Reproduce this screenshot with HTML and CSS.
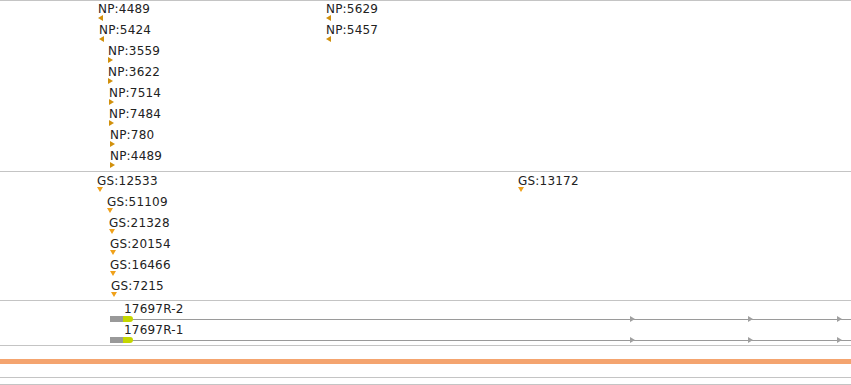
FILE: index.html
```html
<!DOCTYPE html>
<html lang="en">
<head>
    <meta charset="UTF-8">
    <title>Track View</title>
    <link rel="stylesheet" href="styles.css">
</head>
<body>
    <div class="tracks">
        <!-- NP track -->
        <div class="track track-np">
            <div class="feature" style="left:98px; top:0px"><div class="label">NP:4489</div><svg class="glyph np" width="6" height="6"><polygon points="5,0 5,6 0,3"/></svg></div>
            <div class="feature" style="left:99px; top:21px"><div class="label">NP:5424</div><svg class="glyph np" width="6" height="6"><polygon points="5,0 5,6 0,3"/></svg></div>
            <div class="feature" style="left:108px; top:42px"><div class="label">NP:3559</div><svg class="glyph np" width="6" height="6"><polygon points="0,0 5,3 0,6"/></svg></div>
            <div class="feature" style="left:108px; top:63px"><div class="label">NP:3622</div><svg class="glyph np" width="6" height="6"><polygon points="0,0 5,3 0,6"/></svg></div>
            <div class="feature" style="left:109px; top:84px"><div class="label">NP:7514</div><svg class="glyph np" width="6" height="6"><polygon points="0,0 5,3 0,6"/></svg></div>
            <div class="feature" style="left:109px; top:105px"><div class="label">NP:7484</div><svg class="glyph np" width="6" height="6"><polygon points="0,0 5,3 0,6"/></svg></div>
            <div class="feature" style="left:110px; top:126px"><div class="label">NP:780</div><svg class="glyph np" width="6" height="6"><polygon points="0,0 5,3 0,6"/></svg></div>
            <div class="feature" style="left:110px; top:147px"><div class="label">NP:4489</div><svg class="glyph np" width="6" height="6"><polygon points="0,0 5,3 0,6"/></svg></div>
            <div class="feature" style="left:326px; top:0px"><div class="label">NP:5629</div><svg class="glyph np" width="6" height="6"><polygon points="5,0 5,6 0,3"/></svg></div>
            <div class="feature" style="left:326px; top:21px"><div class="label">NP:5457</div><svg class="glyph np" width="6" height="6"><polygon points="5,0 5,6 0,3"/></svg></div>
        </div>

        <!-- GS track -->
        <div class="track track-gs">
            <div class="feature" style="left:97px; top:1px"><div class="label">GS:12533</div><svg class="glyph gs" width="6" height="6"><polygon points="0,0 6,0 3,5"/></svg></div>
            <div class="feature" style="left:107px; top:22px"><div class="label">GS:51109</div><svg class="glyph gs" width="6" height="6"><polygon points="0,0 6,0 3,5"/></svg></div>
            <div class="feature" style="left:109px; top:43px"><div class="label">GS:21328</div><svg class="glyph gs" width="6" height="6"><polygon points="0,0 6,0 3,5"/></svg></div>
            <div class="feature" style="left:110px; top:64px"><div class="label">GS:20154</div><svg class="glyph gs" width="6" height="6"><polygon points="0,0 6,0 3,5"/></svg></div>
            <div class="feature" style="left:110px; top:85px"><div class="label">GS:16466</div><svg class="glyph gs" width="6" height="6"><polygon points="0,0 6,0 3,5"/></svg></div>
            <div class="feature" style="left:111px; top:106px"><div class="label">GS:7215</div><svg class="glyph gs" width="6" height="6"><polygon points="0,0 6,0 3,5"/></svg></div>
            <div class="feature" style="left:518px; top:1px"><div class="label">GS:13172</div><svg class="glyph gs" width="6" height="6"><polygon points="0,0 6,0 3,5"/></svg></div>
        </div>

        <!-- gene track -->
        <div class="track track-gene">
            <div class="feature" style="left:110px; top:0px">
                <div class="label gene-label">17697R-2</div>
                <svg class="glyph gene" width="741" height="7">
                    <rect class="intron" x="0" y="4" width="741" height="1"/>
                    <rect class="utr" x="0" y="1" width="13" height="6"/>
                    <path class="cds" d="M13 1 H20 A3 3 0 0 1 20 7 H13 Z"/>
                    <polygon class="strand" points="520,1 525,4 520,7"/>
                    <polygon class="strand" points="638,1 643,4 638,7"/>
                    <polygon class="strand" points="727,1 732,4 727,7"/>
                </svg>
            </div>
            <div class="feature" style="left:110px; top:21px">
                <div class="label gene-label">17697R-1</div>
                <svg class="glyph gene" width="741" height="7">
                    <rect class="intron" x="0" y="4" width="741" height="1"/>
                    <rect class="utr" x="0" y="1" width="13" height="6"/>
                    <path class="cds" d="M13 1 H20 A3 3 0 0 1 20 7 H13 Z"/>
                    <polygon class="strand" points="520,1 525,4 520,7"/>
                    <polygon class="strand" points="638,1 643,4 638,7"/>
                    <polygon class="strand" points="727,1 732,4 727,7"/>
                </svg>
            </div>
        </div>
    </div>

    <div class="highlight-bar"></div>
    <div class="scale-track"></div>
</body>
</html>
```

FILE: styles.css
```css
body {
    margin: 0;
    font-family: "DejaVu Sans", sans-serif;
    font-size: 12px;
    color: #222;
    background-color: #fff;
    overflow: hidden;
}

.tracks {
    border-top: 1px solid #c4c4c4;
}

.track {
    position: relative;
    border-bottom: 1px solid #c4c4c4;
}

.track-np {
    height: 170px;
}

.track-gs {
    height: 128px;
}

.track-gene {
    height: 44px;
}

.feature {
    position: absolute;
}

    .feature .label {
        line-height: 14px;
        padding-top: 1px;
        margin-bottom: -1px;
        letter-spacing: 0.2px;
        white-space: nowrap;
    }

    .feature .gene-label {
        padding-left: 14px;
    }

.glyph {
    display: block;
}

    .glyph.np polygon {
        fill: #d1900c;
    }

    .glyph.gs polygon {
        fill: #f0a11a;
    }

.gene .intron {
    fill: #9a9a9a;
}

.gene .utr {
    fill: #999;
}

.gene .cds {
    fill: #c4d600;
}

.gene .strand {
    fill: #a0a0a0;
}

.highlight-bar {
    height: 5px;
    margin-top: 13px;
    background-color: #f4a46f;
}

.scale-track {
    height: 6px;
    margin-top: 13px;
    border-top: 1px solid #c4c4c4;
    border-bottom: 1px solid #c4c4c4;
}
```
